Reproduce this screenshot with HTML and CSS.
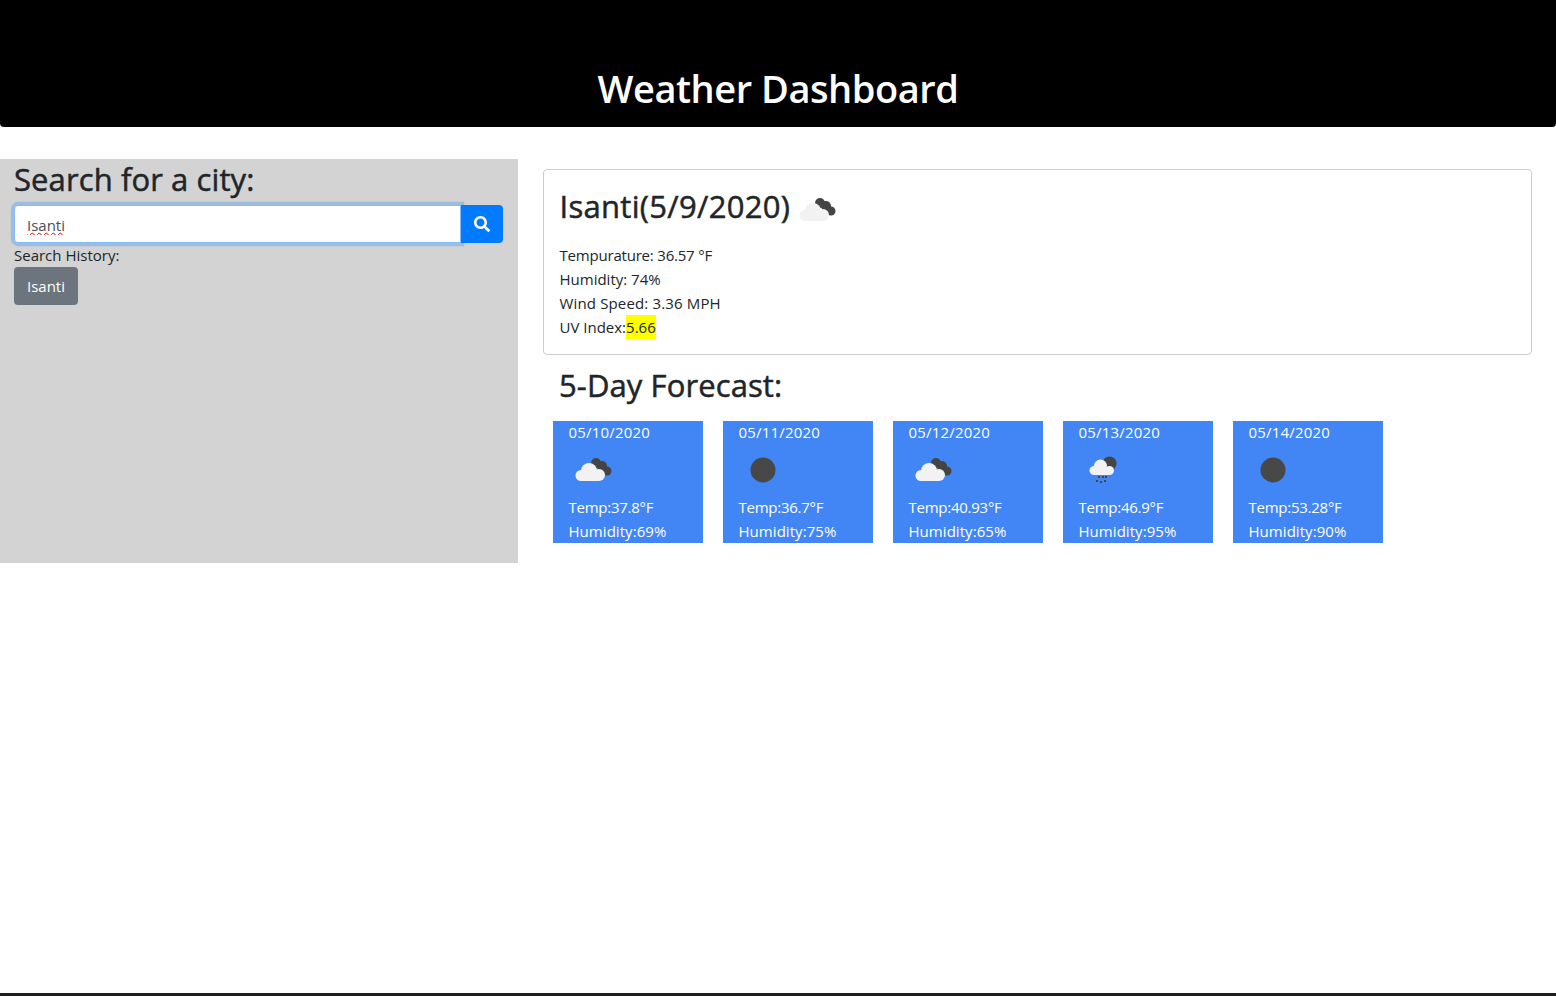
FILE: index.html
```html
<!DOCTYPE html>
<html lang="en">
<head>
    <meta charset="UTF-8">
    <meta name="viewport" content="width=device-width, initial-scale=1.0">
    <title>Weather Dashboard</title>
    <link rel="stylesheet" href="styles.css">
</head>
<body>
    <svg class="sprites" width="0" height="0">
        <symbol id="clouds" viewBox="0 0 50 50">
            <g fill="#444">
                <circle cx="28" cy="18" r="5"/>
                <circle cx="34" cy="21" r="5"/>
                <circle cx="39" cy="26" r="4.500"/>
            </g>
            <g fill="#f2f2f2">
                <circle cx="13" cy="30.500" r="5.500"/>
                <circle cx="21" cy="26" r="8"/>
                <circle cx="31" cy="30" r="6"/>
                <rect x="13" y="30" width="18" height="6"/>
            </g>
        </symbol>
        <symbol id="sun" viewBox="0 0 50 50">
            <circle cx="25" cy="25" r="12.500" fill="#484848"/>
        </symbol>
        <symbol id="rain" viewBox="0 0 50 50">
            <circle cx="31.500" cy="18.500" r="7" fill="#444"/>
            <g fill="#f2f2f2">
                <circle cx="16" cy="25.500" r="4.500"/>
                <circle cx="22.500" cy="21" r="6.500"/>
                <circle cx="31.500" cy="25.500" r="4.500"/>
                <rect x="16" y="25" width="15" height="5"/>
            </g>
            <g fill="#444">
                <rect x="20" y="31" width="2" height="2"/>
                <rect x="24" y="31" width="2" height="2"/>
                <rect x="27" y="31" width="2" height="2"/>
                <rect x="18" y="35" width="2" height="2"/>
                <rect x="22" y="36" width="2" height="2"/>
                <rect x="26" y="35" width="2" height="2"/>
            </g>
        </symbol>
    </svg>

    <header class="banner">
        <h1>Weather Dashboard</h1>
    </header>

    <div class="dashboard">
        <aside class="sidebar">
            <h2>Search for a city:</h2>
            <div class="search-group">
                <input type="text" class="search-input" value="Isanti">
                <button class="search-btn" aria-label="Search">
                    <svg viewBox="0 0 512 512" width="16" height="16"><path fill="#fff" d="M505 442.700L405.300 343c-4.500-4.500-10.600-7-17-7H372c27.600-35.300 44-79.700 44-128C416 93.100 322.900 0 208 0S0 93.100 0 208s93.100 208 208 208c48.300 0 92.700-16.400 128-44v16.300c0 6.400 2.500 12.500 7 17l99.700 99.700c9.400 9.400 24.600 9.400 33.900 0l28.300-28.300c9.400-9.400 9.400-24.600.1-34zM208 336c-70.700 0-128-57.200-128-128 0-70.700 57.200-128 128-128 70.700 0 128 57.200 128 128 0 70.700-57.200 128-128 128z"/></svg>
                </button>
            </div>
            <div class="history-label">Search History:</div>
            <button class="history-btn">Isanti</button>
        </aside>

        <main class="content">
            <section class="current">
                <div class="current-title">
                    <h2>Isanti(5/9/2020)</h2>
                    <svg class="current-icon"><use href="#clouds"/></svg>
                </div>
                <p class="tight">Tempurature: 36.57 °F</p>
                <p>Humidity: 74%</p>
                <p class="wide">Wind Speed: 3.36 MPH</p>
                <p>UV Index:<span class="uv">5.66</span></p>
            </section>

            <h3 class="forecast-title">5-Day Forecast:</h3>
            <div class="forecast">
                <div class="day">
                    <div class="day-date">05/10/2020</div>
                    <svg class="day-icon"><use href="#clouds"/></svg>
                    <div class="day-temp">Temp:37.8°F</div>
                    <div class="day-hum">Humidity:69%</div>
                </div>
                <div class="day">
                    <div class="day-date">05/11/2020</div>
                    <svg class="day-icon"><use href="#sun"/></svg>
                    <div class="day-temp">Temp:36.7°F</div>
                    <div class="day-hum">Humidity:75%</div>
                </div>
                <div class="day">
                    <div class="day-date">05/12/2020</div>
                    <svg class="day-icon"><use href="#clouds"/></svg>
                    <div class="day-temp">Temp:40.93°F</div>
                    <div class="day-hum">Humidity:65%</div>
                </div>
                <div class="day">
                    <div class="day-date">05/13/2020</div>
                    <svg class="day-icon"><use href="#rain"/></svg>
                    <div class="day-temp">Temp:46.9°F</div>
                    <div class="day-hum">Humidity:95%</div>
                </div>
                <div class="day">
                    <div class="day-date">05/14/2020</div>
                    <svg class="day-icon"><use href="#sun"/></svg>
                    <div class="day-temp">Temp:53.28°F</div>
                    <div class="day-hum">Humidity:90%</div>
                </div>
            </div>
        </main>
    </div>

    <div class="taskbar"></div>
</body>
</html>
```

FILE: styles.css
```css
* {
    box-sizing: border-box;
}

html, body {
    height: 100%;
}

body {
    font-family: "Open Sans", "Noto Sans", sans-serif;
    font-size: 15px;
    line-height: 24px;
    color: #212529;
    background-color: #fff;
    margin: 0;
    display: flex;
    flex-direction: column;
}

.sprites {
    position: absolute;
}

.tight {
    letter-spacing: -0.2px;
}

.wide {
    letter-spacing: 0.15px;
}

.banner {
    height: 127px;
    background-color: #000;
    border-radius: 0 0 4px 4px;
    padding-top: 61px;
    text-align: center;
}

.banner h1 {
    margin: 0;
    color: #fff;
    font-size: 38px;
    line-height: 54px;
    font-weight: 600;
    letter-spacing: -0.45px;
}

.dashboard {
    flex: 1;
    display: flex;
    align-items: flex-start;
    padding-top: 32px;
}

.sidebar {
    width: 518px;
    height: 404px;
    background-color: #d3d3d3;
    padding: 0 15px 0 14px;
}

.sidebar h2,
.current-title h2,
.forecast-title {
    font-size: 31px;
    font-weight: 500;
    -webkit-text-stroke: 0.5px #212529;
}

.sidebar h2 {
    margin: 0 0 6px;
    line-height: 40px;
    letter-spacing: 0.1px;
}

.search-group {
    display: flex;
    height: 38px;
}

.search-input {
    flex: 1;
    min-width: 0;
    padding: 2px 12px 0;
    border: 1px solid #80bdff;
    border-radius: 4px 0 0 4px;
    box-shadow: 0 0 0 3.2px rgba(0, 123, 255, 0.25);
    outline: none;
    font-family: inherit;
    font-size: 15px;
    color: #495057;
    text-decoration: underline wavy #e00;
    text-decoration-thickness: 1px;
}

.search-btn {
    width: 42px;
    border: none;
    border-radius: 0 4px 4px 0;
    background-color: #007bff;
    display: flex;
    align-items: center;
    justify-content: center;
    padding: 0;
}

.history-btn {
    display: block;
    height: 38px;
    padding: 0 13px;
    border: none;
    border-radius: 4px;
    background-color: #6c757d;
    color: #fff;
    font-family: inherit;
    font-size: 15px;
}

.content {
    flex: 1;
    padding: 10px 24px 0 25px;
}

.current {
    height: 186px;
    border: 1px solid #ccc;
    border-radius: 4px;
    padding: 16px 16px 0 15.500px;
}

.current-title {
    display: flex;
    align-items: center;
    height: 42px;
    margin-bottom: 15px;
}

.current-title h2 {
    margin: 0 0 2px;
    line-height: 42px;
    letter-spacing: 0.3px;
}

.current-icon {
    width: 50px;
    height: 50px;
    margin: 6px 0 0 2px;
}

.current p {
    margin: 0;
}

.uv {
    display: inline-block;
    background-color: #ff0;
}

.forecast-title {
    margin: 10px 0 16px 16px;
    line-height: 40px;
    letter-spacing: 0.1px;
}

.forecast {
    display: flex;
    gap: 20px;
    padding-left: 10px;
}

.day {
    width: 150px;
    height: 122px;
    background-color: #4285f4;
    color: #fff;
    padding-left: 15.500px;
}

.day-date {
    height: 24px;
    line-height: 23px;
    letter-spacing: 0.2px;
}

.day-temp {
    letter-spacing: -0.25px;
}

.day-hum {
    letter-spacing: 0.05px;
}

.day-icon {
    display: block;
    width: 50px;
    height: 50px;
    margin-left: -0.500px;
}

.taskbar {
    height: 3px;
    background-color: #1e1e1e;
}
```
